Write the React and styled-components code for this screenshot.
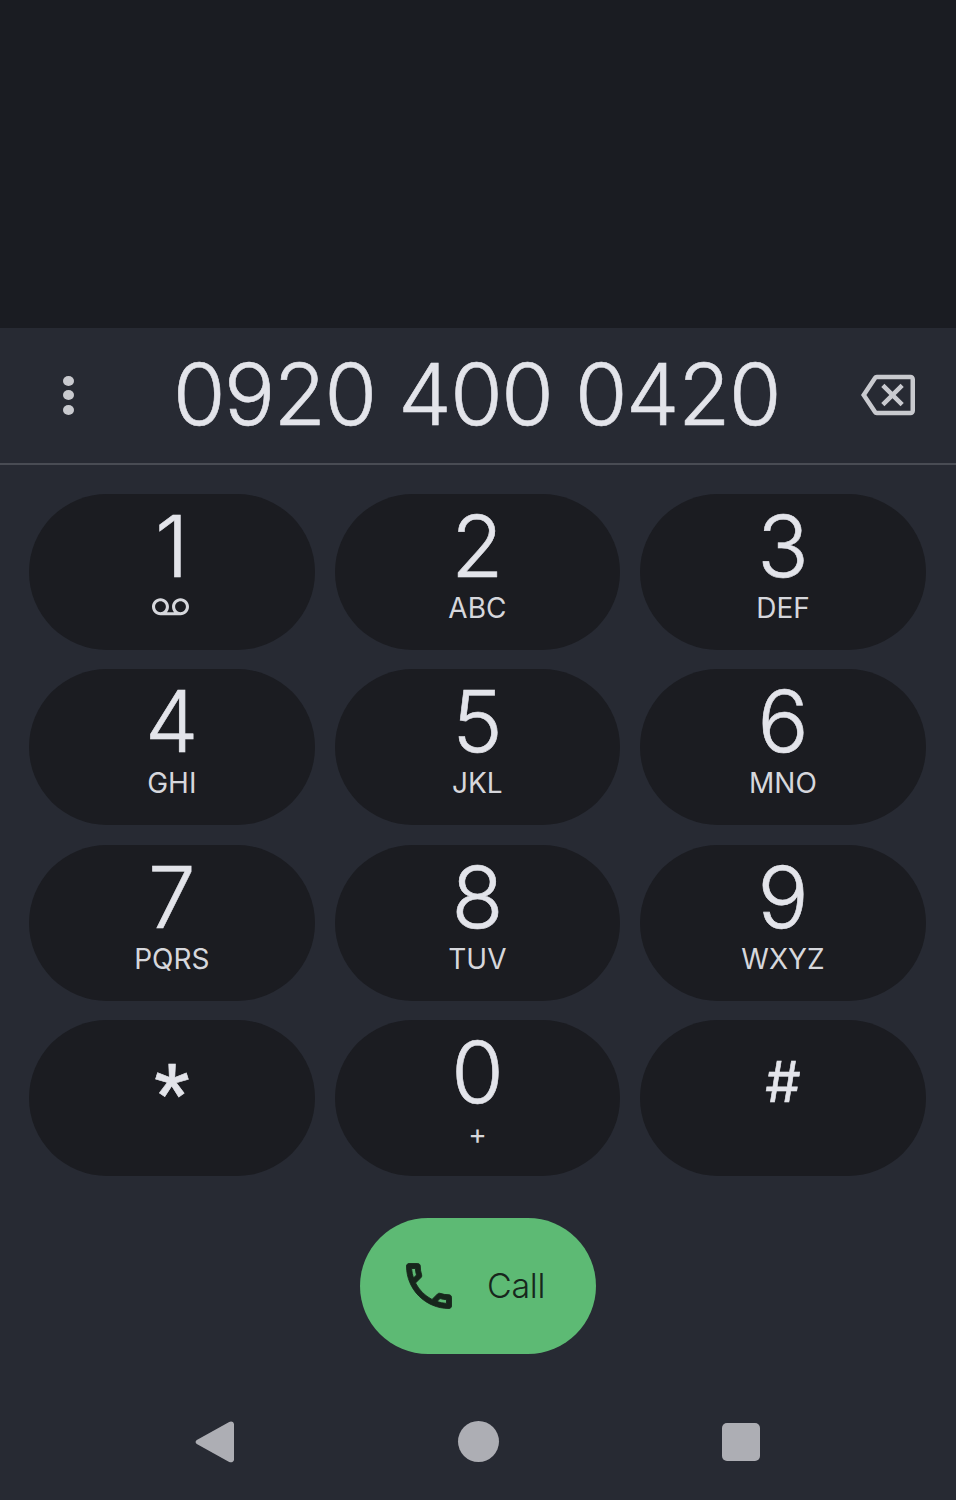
import styled, { createGlobalStyle, css } from "styled-components";

const GlobalStyle = createGlobalStyle`
  html, body {
    margin: 0;
    padding: 0;
    background: #272a33;
  }
`;

const keys = [
  { digit: "1", voicemail: true },
  { digit: "2", sub: "ABC" },
  { digit: "3", sub: "DEF" },
  { digit: "4", sub: "GHI" },
  { digit: "5", sub: "JKL" },
  { digit: "6", sub: "MNO" },
  { digit: "7", sub: "PQRS" },
  { digit: "8", sub: "TUV" },
  { digit: "9", sub: "WXYZ" },
  { digit: "*", variant: "star" },
  { digit: "0", sub: "+" },
  { digit: "#", variant: "hash" },
];

function App() {
  return (
    <Screen>
      <GlobalStyle />
      <TopArea />
      <DialBar>
        <MoreButton>
          <Dot />
          <Dot />
          <Dot />
        </MoreButton>
        <PhoneNumber>0920 400 0420</PhoneNumber>
        <BackspaceIcon viewBox="0 0 24 24">
          <path d="M22 3H7c-.69 0-1.23.35-1.59.88L0 12l5.41 8.11c.36.53.9.89 1.59.89h15c1.1 0 2-.9 2-2V5c0-1.1-.9-2-2-2zm0 16H7.07L2.4 12l4.66-7H22v14zm-11.59-2L14 13.41 17.59 17 19 15.59 15.41 12 19 8.41 17.59 7 14 10.59 10.41 7 9 8.41 12.59 12 9 15.59z" />
        </BackspaceIcon>
      </DialBar>
      <Keypad>
        {keys.map((k) => (
          <Key key={k.digit}>
            <Digit $variant={k.variant}>{k.digit}</Digit>
            {k.sub && <SubLabel>{k.sub}</SubLabel>}
            {k.voicemail && (
              <VoicemailIcon viewBox="0 0 24 24">
                <path d="M18.5 6C15.46 6 13 8.46 13 11.5c0 1.33.47 2.55 1.26 3.5H9.74c.79-.95 1.26-2.17 1.26-3.5C11 8.46 8.54 6 5.5 6S0 8.46 0 11.5 2.46 17 5.5 17h13c3.04 0 5.5-2.46 5.5-5.5S21.54 6 18.5 6zm-13 9C3.57 15 2 13.43 2 11.5S3.57 8 5.5 8 9 9.57 9 11.5 7.43 15 5.5 15zm13 0c-1.93 0-3.5-1.57-3.5-3.5S16.57 8 18.5 8 22 9.57 22 11.5 20.43 15 18.5 15z" />
              </VoicemailIcon>
            )}
          </Key>
        ))}
      </Keypad>
      <CallRow>
        <CallButton>
          <PhoneIcon viewBox="0 0 24 24">
            <path d="M6.54 5c.06.89.21 1.76.45 2.59l-1.2 1.2c-.41-1.2-.67-2.47-.76-3.79h1.51m9.86 12.02c.85.24 1.72.39 2.6.45v1.49c-1.32-.09-2.59-.35-3.8-.75l1.2-1.19M7.5 3H4c-.55 0-1 .45-1 1 0 9.39 7.61 17 17 17 .55 0 1-.45 1-1v-3.49c0-.55-.45-1-1-1-1.24 0-2.45-.2-3.57-.57-.1-.04-.21-.05-.31-.05-.26 0-.51.1-.71.29l-2.2 2.2c-2.83-1.45-5.15-3.76-6.59-6.59l2.2-2.2c.28-.28.36-.67.25-1.02C8.7 6.45 8.5 5.25 8.5 4c0-.55-.45-1-1-1z" />
          </PhoneIcon>
          <CallLabel>Call</CallLabel>
        </CallButton>
      </CallRow>
      <NavBar>
        <NavSlot>
          <BackIcon viewBox="0 0 40 44">
            <path d="M36 1.5c-.6 0-1.2.2-1.8.6L1.8 20c-1.6 1-1.6 3 0 4l32.4 17.9c2 1.2 4.8 0 4.8-2.4V4.5c0-1.8-1.3-3-3-3z" />
          </BackIcon>
        </NavSlot>
        <NavSlot>
          <HomeDot />
        </NavSlot>
        <NavSlot>
          <RecentSquare />
        </NavSlot>
      </NavBar>
    </Screen>
  );
}

const Screen = styled.main`
  display: flex;
  flex-direction: column;
  width: 956px;
  height: 1500px;
  overflow: hidden;
  background: #272a33;
  font-family: "Inter", "Roboto", sans-serif;
  color: #e3e4ea;
`;

const TopArea = styled.div`
  flex: none;
  height: 328px;
  background: #1a1c22;
`;

const DialBar = styled.header`
  flex: none;
  display: grid;
  grid-template-columns: 1fr auto 1fr;
  align-items: center;
  box-sizing: border-box;
  height: 137px;
  padding: 0 41px 2px;
  border-bottom: 2px solid #494c54;
`;

const MoreButton = styled.div`
  display: flex;
  flex-direction: column;
  gap: 4.5px;
  width: 11px;
  margin: 1px 0 0 22px;
`;

const Dot = styled.span`
  width: 11px;
  height: 10px;
  border-radius: 50%;
  background: #c9cacf;
`;

const PhoneNumber = styled.div`
  margin-left: -3px;
  font-size: 85px;
  font-weight: 300;
  line-height: 100px;
  letter-spacing: -1.4px;
  white-space: nowrap;
  color: #e3e4ea;
  -webkit-text-stroke: 0.6px #e3e4ea;
`;

const BackspaceIcon = styled.svg`
  justify-self: end;
  width: 54px;
  height: 54px;
  fill: #c9cacf;
`;

const Keypad = styled.section`
  flex: none;
  display: grid;
  grid-template-columns: repeat(3, 285.6px);
  grid-auto-rows: 156px;
  column-gap: 20px;
  row-gap: 19.3px;
  padding: 29px 0 0 29px;
`;

const Key = styled.div`
  display: flex;
  flex-direction: column;
  align-items: center;
  border-radius: 78px;
  background: #1b1c21;
`;

const digitVariants = {
  star: css`
    margin-top: 26px;
    font-family: "Roboto", sans-serif;
    font-size: 78px;
    font-weight: 500;
  `,
  hash: css`
    margin-top: 14px;
    font-size: 56px;
    font-weight: 400;
  `,
};

const Digit = styled.span`
  height: 96px;
  margin-top: 5px;
  font-size: 85px;
  font-weight: 300;
  line-height: 96px;
  color: #e3e4ea;
  -webkit-text-stroke: 0.6px #e3e4ea;
  ${(p) => digitVariants[p.$variant]}
`;

const SubLabel = styled.span`
  font-size: 28px;
  line-height: 26px;
  color: #d6d7dc;
`;

const VoicemailIcon = styled.svg`
  width: 37px;
  height: 37px;
  margin: -6px 2px 0 0;
  fill: #d6d7dc;
`;

const CallRow = styled.div`
  flex: none;
  display: flex;
  justify-content: center;
  padding-top: 42px;
`;

const CallButton = styled.div`
  display: flex;
  align-items: center;
  box-sizing: border-box;
  width: 236px;
  height: 136px;
  padding-left: 39px;
  border-radius: 68px;
  background: #5dba74;
`;

const PhoneIcon = styled.svg`
  flex: none;
  width: 60px;
  height: 60px;
  fill: #17261c;
  stroke: #17261c;
  stroke-width: 0.35;
`;

const CallLabel = styled.span`
  margin-left: 28px;
  font-size: 34px;
  font-weight: 300;
  letter-spacing: -0.3px;
  color: #17261c;
`;

const NavBar = styled.nav`
  flex: none;
  display: flex;
  justify-content: center;
  align-items: center;
  height: 84px;
  margin-top: 46px;
`;

const NavSlot = styled.div`
  display: flex;
  justify-content: center;
  align-items: center;
  width: 263px;
`;

const BackIcon = styled.svg`
  width: 40px;
  height: 44px;
  fill: #adaeb4;
`;

const HomeDot = styled.span`
  width: 41px;
  height: 41px;
  border-radius: 50%;
  background: #adaeb4;
`;

const RecentSquare = styled.span`
  width: 38px;
  height: 38px;
  border-radius: 5px;
  background: #adaeb4;
`;

export default App;
